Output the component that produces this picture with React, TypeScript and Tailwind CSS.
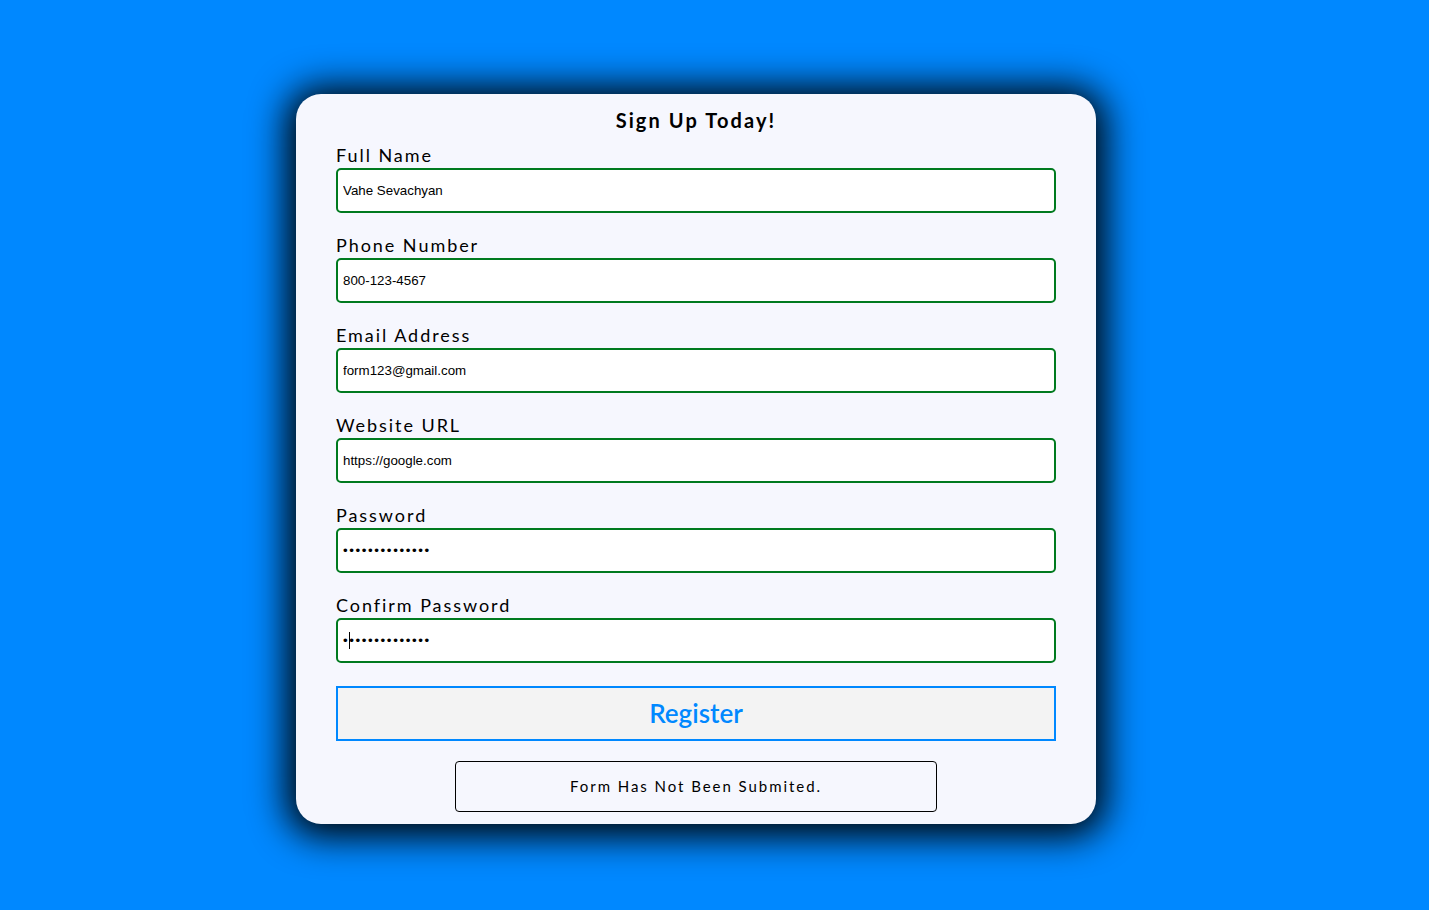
import React from "react";

const fields = [
  { label: "Full Name", value: "Vahe Sevachyan", type: "text", caret: false },
  { label: "Phone Number", value: "800-123-4567", type: "text", caret: false },
  { label: "Email Address", value: "form123@gmail.com", type: "text", caret: false },
  { label: "Website URL", value: "https://google.com", type: "text", caret: false },
  { label: "Password", value: "abcdefghijklmn", type: "password", caret: false },
  { label: "Confirm Password", value: "abcdefghijklmn", type: "password", caret: true },
];

export default function App() {
  return (
    <div className="min-h-[910px] w-full bg-[#0088ff] pt-[94px] font-['Lato',sans-serif]">
      <div className="ml-[296px] w-[800px] h-[730px] rounded-[25px] bg-[#f6f7fe] shadow-[0_3px_36px_10px_rgba(0,0,0,0.97)] relative">
        <h1 className="absolute left-0 right-0 top-[12px] text-center text-[20px] leading-[28px] font-bold tracking-[2.1px] text-black">
          Sign Up Today!
        </h1>
        <div className="absolute left-[40px] right-[40px] top-[50px] flex flex-col">
          {fields.map((f) => (
            <div key={f.label} className="flex flex-col mb-[21px]">
              <label className="text-[18px] leading-[22px] tracking-[1.95px] text-black mb-[2px]">
                {f.label}
              </label>
              <div className="relative">
                <input
                  type={f.type}
                  defaultValue={f.value}
                  readOnly
                  className={
                    f.type === "password"
                      ? "h-[45px] w-full rounded-[5px] border-2 border-[#007a1f] bg-white pl-[5px] text-[13.33px] tracking-[1.6px] text-black font-['Liberation_Sans',Arial,sans-serif] outline-none"
                      : "h-[45px] w-full rounded-[5px] border-2 border-[#007a1f] bg-white pl-[5px] text-[13.33px] text-black font-['Liberation_Sans',Arial,sans-serif] outline-none"
                  }
                />
                {f.caret && (
                  <span className="absolute left-[13px] top-[14px] h-[17px] w-[1px] bg-black" />
                )}
              </div>
            </div>
          ))}
          <button className="mt-[2px] h-[55px] w-full border-2 border-[#0088ff] bg-[#f3f3f3] text-[26px] font-semibold text-[#0088ff] font-['Lato',sans-serif]">
            Register
          </button>
          <div className="mt-[20px] mx-auto w-[482px] h-[51px] border border-black rounded-[4px] flex items-center justify-center text-[15px] tracking-[1.95px] text-black">
            Form Has Not Been Submited.
          </div>
        </div>
      </div>
    </div>
  );
}
